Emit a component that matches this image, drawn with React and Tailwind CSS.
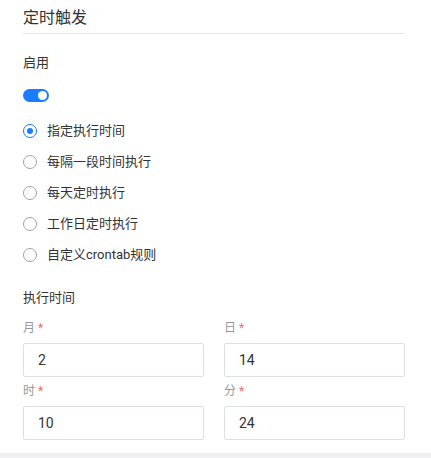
import React, { useState } from 'react'

const options = ['指定执行时间', '每隔一段时间执行', '每天定时执行', '工作日定时执行', '自定义crontab规则']

const fields = [
  { label: '月', value: '2' },
  { label: '日', value: '14' },
  { label: '时', value: '10' },
  { label: '分', value: '24' },
]

const App = () => {
  const [selected, setSelected] = useState(0)
  const [enabled, setEnabled] = useState(true)

  return (
    <div className="w-[431px] h-[458px] bg-white flex flex-col text-[#333] font-['Roboto','Noto_Sans_CJK_SC',sans-serif]">
      <div className="px-[23px] pr-[26px] flex-1">
        <div className="pt-[6px] pb-[3px] border-b border-[#e2e4e8] text-[16px] leading-6">定时触发</div>

        <div className="mt-[19px] text-[13px] leading-5">启用</div>
        <button
          onClick={() => setEnabled(!enabled)}
          className={`mt-[16px] w-[26px] h-[13px] rounded-full flex items-center px-[2px] ${enabled ? 'bg-[#1a7cff] justify-end' : 'bg-[#c0c4cc] justify-start'}`}
        >
          <span className="w-[9px] h-[9px] rounded-full bg-white block" />
        </button>

        <div className="mt-[13px] flex flex-col">
          {options.map((item, idx) => (
            <label key={idx} onClick={() => setSelected(idx)} className="h-[31px] flex items-center gap-[10px] text-[13px] cursor-pointer">
              <span className={`w-[14px] h-[14px] rounded-full border flex items-center justify-center ${selected == idx ? 'border-[#1a7cff]' : 'border-[#9aa3b5]'}`}>
                {selected == idx && <span className="w-[6px] h-[6px] rounded-full bg-[#1a7cff]" />}
              </span>
              <span>{item}</span>
            </label>
          ))}
        </div>

        <div className="mt-[18px] text-[13px] leading-5">执行时间</div>
        <div className="mt-[1px] grid grid-cols-2 gap-x-[20px]">
          {fields.map((f, idx) => (
            <div key={idx}>
              <div className={`h-[18px] text-[12px] leading-[18px] text-[#999] flex items-center gap-[3px] ${idx < 2 ? 'mt-[10px]' : 'mt-[5px]'}`}>
                <span>{f.label}</span>
                <span className="text-[#f56c6c]">*</span>
              </div>
              <div className="mt-[6px] h-[34px] border border-[#dcdfe6] rounded-[2px] flex items-center px-[14px] text-[14px] text-[#333]">
                {f.value}
              </div>
            </div>
          ))}
        </div>
      </div>
      <div className="h-[5px] bg-[#f0f0f4]" />
    </div>
  )
}

export default App
